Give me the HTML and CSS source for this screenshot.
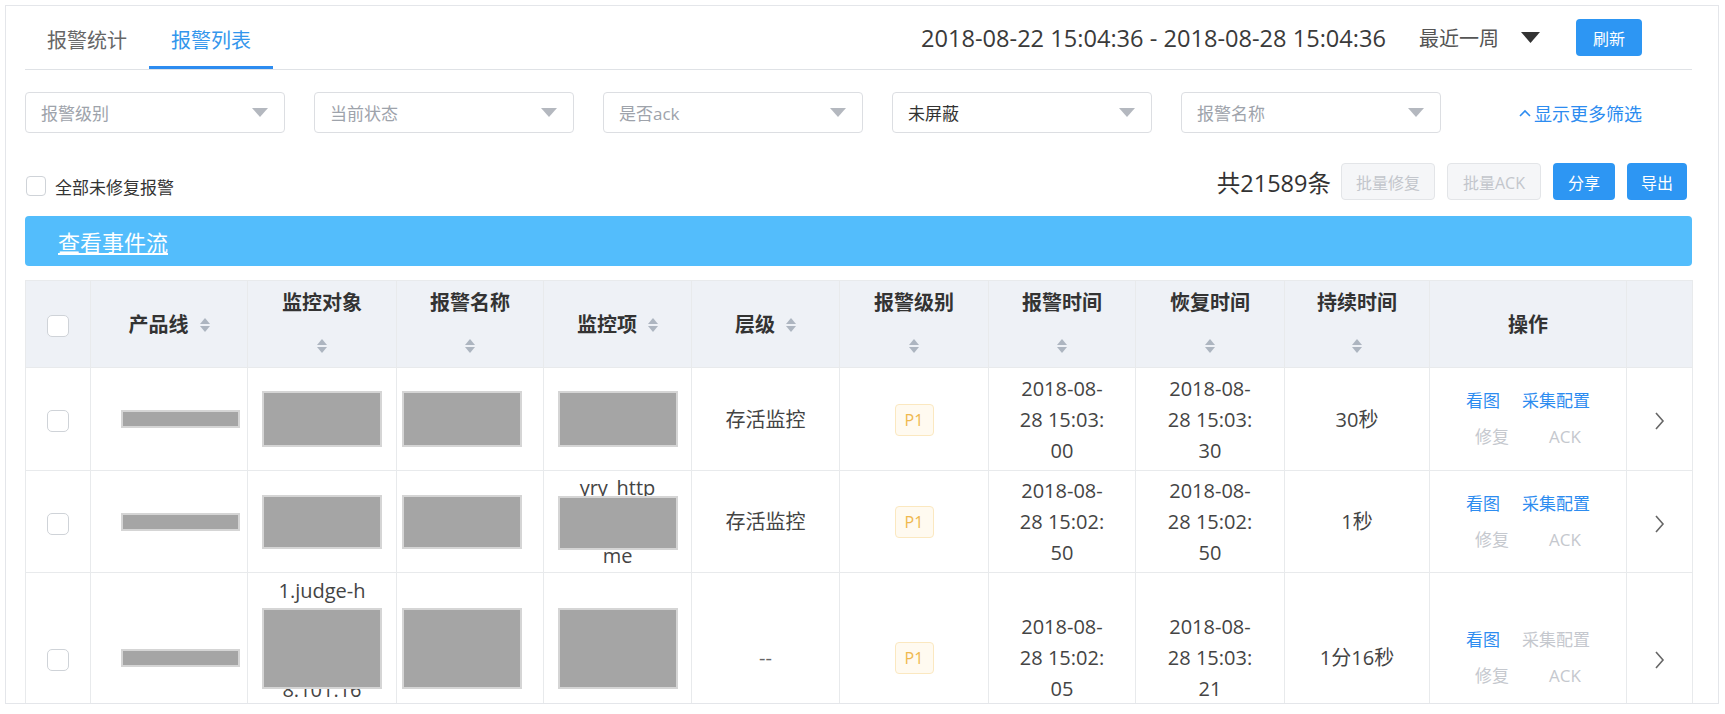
FILE: index.html
```html
<!DOCTYPE html>
<html lang="zh">
<head>
<meta charset="utf-8">
<title>报警列表</title>
<link rel="stylesheet" href="styles.css">
</head>
<body>
<div class="card">
  <div class="topbar">
    <div class="tabs">
      <div class="tab">报警统计</div>
      <div class="tab active">报警列表</div>
    </div>
    <div class="range">
      <span class="range-text">2018-08-22 15:04:36 - 2018-08-28 15:04:36</span>
      <span class="period">最近一周<svg class="period-caret" width="19" height="11" viewBox="0 0 19 11"><polygon points="0,0 19,0 9.5,11" fill="#333"/></svg></span>
      <button class="btn btn-primary btn-refresh">刷新</button>
    </div>
  </div>

  <div class="filters">
    <div class="select"><span class="ph">报警级别</span><svg class="caret" width="16" height="9" viewBox="0 0 16 9"><polygon points="0,0 16,0 8,9" fill="#b4b8bf"/></svg></div>
    <div class="select"><span class="ph">当前状态</span><svg class="caret" width="16" height="9" viewBox="0 0 16 9"><polygon points="0,0 16,0 8,9" fill="#b4b8bf"/></svg></div>
    <div class="select"><span class="ph">是否ack</span><svg class="caret" width="16" height="9" viewBox="0 0 16 9"><polygon points="0,0 16,0 8,9" fill="#b4b8bf"/></svg></div>
    <div class="select"><span class="val">未屏蔽</span><svg class="caret" width="16" height="9" viewBox="0 0 16 9"><polygon points="0,0 16,0 8,9" fill="#b4b8bf"/></svg></div>
    <div class="select"><span class="ph">报警名称</span><svg class="caret" width="16" height="9" viewBox="0 0 16 9"><polygon points="0,0 16,0 8,9" fill="#b4b8bf"/></svg></div>
    <a class="more"><svg width="12" height="8" viewBox="0 0 12 8"><polyline points="1,7 6,2 11,7" fill="none" stroke="#2d8cf0" stroke-width="1.6"/></svg>显示更多筛选</a>
  </div>

  <div class="toolbar">
    <label class="check-label"><span class="checkbox"></span>全部未修复报警</label>
    <div class="actions">
      <span class="total">共21589条</span>
      <button class="btn btn-disabled">批量修复</button>
      <button class="btn btn-disabled">批量ACK</button>
      <button class="btn btn-primary btn-share">分享</button>
      <button class="btn btn-primary btn-export">导出</button>
    </div>
  </div>

  <div class="banner"><a>查看事件流</a></div>

  <table class="grid">
    <colgroup>
      <col style="width:65px"><col style="width:157px"><col style="width:149px"><col style="width:147px">
      <col style="width:148px"><col style="width:148px"><col style="width:149px"><col style="width:147px">
      <col style="width:149px"><col style="width:145px"><col style="width:197px"><col style="width:66px">
    </colgroup>
    <thead>
      <tr>
        <th class="flush"><span class="checkbox cb"></span></th>
        <th>产品线<span class="sort"><i class="up"></i><i class="down"></i></span></th>
        <th><div>监控对象</div><div><span class="sort solo"><i class="up"></i><i class="down"></i></span></div></th>
        <th><div>报警名称</div><div><span class="sort solo"><i class="up"></i><i class="down"></i></span></div></th>
        <th>监控项<span class="sort"><i class="up"></i><i class="down"></i></span></th>
        <th>层级<span class="sort"><i class="up"></i><i class="down"></i></span></th>
        <th><div>报警级别</div><div><span class="sort solo"><i class="up"></i><i class="down"></i></span></div></th>
        <th><div>报警时间</div><div><span class="sort solo"><i class="up"></i><i class="down"></i></span></div></th>
        <th><div>恢复时间</div><div><span class="sort solo"><i class="up"></i><i class="down"></i></span></div></th>
        <th><div>持续时间</div><div><span class="sort solo"><i class="up"></i><i class="down"></i></span></div></th>
        <th>操作</th>
        <th class="flush"></th>
      </tr>
    </thead>
    <tbody>
      <tr class="r1">
        <td class="flush"><span class="checkbox cb"></span></td>
        <td class="flush"><span class="redact bar"></span></td>
        <td class="flush"><span class="redact box h56"></span></td>
        <td class="flush"><span class="redact box h56 near"></span></td>
        <td class="flush"><span class="redact box h56"></span></td>
        <td>存活监控</td>
        <td><span class="tag">P1</span></td>
        <td>2018-08-28 15:03:00</td>
        <td>2018-08-28 15:03:30</td>
        <td>30秒</td>
        <td class="flush"><div class="ops"><div class="ops-row"><span class="on">看图</span><span class="on">采集配置</span></div><div class="ops-row wide"><span class="off">修复</span><span class="off">ACK</span></div></div></td>
        <td class="flush"><svg class="chev" width="11" height="20" viewBox="0 0 11 20"><polyline points="2,2 9,10 2,18" fill="none" stroke="#666" stroke-width="1.6"/></svg></td>
      </tr>
      <tr class="r2">
        <td class="flush"><span class="checkbox cb"></span></td>
        <td class="flush"><span class="redact bar"></span></td>
        <td class="flush"><span class="redact box h54"></span></td>
        <td class="flush"><span class="redact box h54 near"></span></td>
        <td class="flush">
          <div class="stack">
            <span class="peek">yry_http</span>
            <span class="redact box h54 cover-a"></span>
            <span class="peek tail-a">me</span>
          </div>
        </td>
        <td>存活监控</td>
        <td><span class="tag">P1</span></td>
        <td>2018-08-28 15:02:50</td>
        <td>2018-08-28 15:02:50</td>
        <td>1秒</td>
        <td class="flush"><div class="ops"><div class="ops-row"><span class="on">看图</span><span class="on">采集配置</span></div><div class="ops-row wide"><span class="off">修复</span><span class="off">ACK</span></div></div></td>
        <td class="flush"><svg class="chev" width="11" height="20" viewBox="0 0 11 20"><polyline points="2,2 9,10 2,18" fill="none" stroke="#666" stroke-width="1.6"/></svg></td>
      </tr>
      <tr class="r3">
        <td class="flush"><span class="checkbox cb"></span></td>
        <td class="flush"><span class="redact bar"></span></td>
        <td class="flush top t4">
          <div class="stack">
            <span class="peek">1.judge-h</span>
            <span class="redact box h81 cover-b"></span>
            <span class="peek tail-b">8.101.16</span>
          </div>
        </td>
        <td class="flush top t35"><span class="redact box h81 near"></span></td>
        <td class="flush top t35"><span class="redact box h81"></span></td>
        <td class="muted">--</td>
        <td><span class="tag">P1</span></td>
        <td>2018-08-28 15:02:05</td>
        <td>2018-08-28 15:03:21</td>
        <td>1分16秒</td>
        <td class="flush"><div class="ops"><div class="ops-row"><span class="on">看图</span><span class="off">采集配置</span></div><div class="ops-row wide"><span class="off">修复</span><span class="off">ACK</span></div></div></td>
        <td class="flush"><svg class="chev" width="11" height="20" viewBox="0 0 11 20"><polyline points="2,2 9,10 2,18" fill="none" stroke="#666" stroke-width="1.6"/></svg></td>
      </tr>
    </tbody>
  </table>
</div>
</body>
</html>
```

FILE: styles.css
```css
* { box-sizing: border-box; }
html, body { margin: 0; padding: 0; background: #fff; }
body {
  font-family: "Open Sans", "Noto Sans CJK SC", sans-serif;
  color: #333;
}

.card {
  margin: 5px 0 0 5px;
  width: 1714px;
  height: 699px;
  border: 1px solid #e4e6ea;
  overflow: hidden;
  padding: 0 26px 0 19px;
}

/* top bar */
.topbar {
  display: flex;
  justify-content: space-between;
  height: 64px;
  border-bottom: 1px solid #dfe2e6;
}
.tabs { display: flex; }
.tab {
  padding: 21px 22px 0;
  height: 63px;
  font-size: 20px;
  line-height: 28px;
  color: #666;
  border-bottom: 3px solid transparent;
}
.tab.active { color: #3396ec; border-bottom-color: #2d8cf0; }

.range {
  display: flex;
  align-items: center;
  padding-right: 50px;
}
.range-text { font-size: 23.6px; color: #3a3a3a; }
.period {
  margin-left: 33px;
  font-size: 20px;
  color: #555;
  display: flex;
  align-items: center;
  gap: 22px;
}
.btn {
  border: none;
  border-radius: 4px;
  font-family: inherit;
  font-size: 16px;
  height: 37px;
  padding: 0;
}
.btn-primary { background: #2d96f3; color: #fff; }
.btn-refresh { margin-left: 36px; width: 66px; }

/* filters */
.filters {
  display: flex;
  align-items: center;
  gap: 29px;
  margin-top: 22px;
}
.select {
  width: 260px;
  height: 41px;
  border: 1px solid #dcdee2;
  border-radius: 4px;
  display: flex;
  align-items: center;
  justify-content: space-between;
  padding: 0 16px 0 15px;
  font-size: 17px;
}
.ph { color: #9ea3ab; }
.val { color: #333; }
.more {
  margin-left: auto;
  margin-right: 50px;
  color: #2d8cf0;
  font-size: 18px;
  display: flex;
  align-items: center;
  gap: 3px;
}

/* toolbar */
.toolbar {
  display: flex;
  justify-content: space-between;
  align-items: center;
  margin-top: 30px;
  height: 37px;
}
.check-label {
  display: flex;
  align-items: center;
  gap: 9px;
  font-size: 17px;
  padding-top: 9px;
  padding-left: 1px;
}
.checkbox {
  display: inline-block;
  width: 20px;
  height: 20px;
  border: 1px solid #cfd3d8;
  border-radius: 4px;
  background: #fff;
}
.actions {
  display: flex;
  align-items: center;
  gap: 12px;
  margin-right: 5px;
}
.total { font-size: 23.5px; color: #333; margin-right: -2px; }
.btn-disabled {
  background: #f5f6f8;
  color: #c3c6cc;
  border: 1px solid #e3e5e8;
  width: 94px;
}
.btn-share { width: 62px; }
.btn-export { width: 60px; }

/* banner */
.banner {
  margin-top: 16px;
  height: 50px;
  background: #53bdfc;
  border-radius: 4px;
  display: flex;
  align-items: center;
  padding-left: 33px;
}
.banner a { color: #fff; font-size: 22px; text-decoration: underline; }

/* table */
.grid {
  margin-top: 14px;
  width: 1667px;
  border-collapse: collapse;
  table-layout: fixed;
}
.grid th, .grid td {
  border: 1px solid #e8eaec;
  padding: 0 29px;
  text-align: center;
}
.grid th {
  background: #eef1f6;
  font-size: 20px;
  font-weight: 700;
  line-height: 43px;
  height: 86px;
  color: #333;
  white-space: nowrap;
}
.grid td {
  font-size: 20px;
  line-height: 31px;
  color: #444;
  word-break: break-all;
}
.grid .flush { padding: 0; }
.grid .top { vertical-align: top; }
.grid .t4 { padding-top: 4px; }
.grid .t35 { padding-top: 35px; }
.grid .muted { color: #666; }

.r1 { height: 103px; }
.r2 { height: 102px; }
.r3 { height: 170px; }

.cb { width: 22px; height: 22px; border-radius: 5px; vertical-align: middle; }

.sort {
  display: inline-flex;
  flex-direction: column;
  gap: 2px;
  vertical-align: middle;
  margin-left: 11px;
  margin-top: -3px;
}
.sort.solo { margin-left: 0; }
.sort i { display: block; width: 0; height: 0; border-left: 5.5px solid transparent; border-right: 5.5px solid transparent; }
.sort .up { border-bottom: 6px solid #adb5c0; }
.sort .down { border-top: 6px solid #adb5c0; }

.redact {
  display: block;
  margin: 0 auto;
  background: #a5a5a5;
  border: 2px solid #d5d5d5;
}
.redact.bar { width: 119px; height: 18px; position: relative; left: 11px; }
.redact.box { width: 120px; }
.redact.near { margin-left: 5px; }
.h56 { height: 56px; }
.h54 { height: 54px; }
.h81 { height: 81px; }

.stack { display: flex; flex-direction: column; align-items: center; }
.peek { line-height: 28px; font-size: 20px; color: #444; }
.cover-a { margin-top: -6px; position: relative; z-index: 1; }
.tail-a { margin-top: -8px; }
.cover-b { margin-top: 3px; position: relative; z-index: 1; }
.tail-b { margin-top: -13px; }

.tag {
  display: inline-block;
  width: 39px;
  height: 32px;
  line-height: 30px;
  border: 1px solid #fbe8c0;
  background: #fffaf0;
  color: #efb84e;
  font-size: 16px;
  border-radius: 4px;
  vertical-align: middle;
}

.ops {
  display: flex;
  flex-direction: column;
  align-items: center;
  gap: 14px;
  font-size: 17px;
  line-height: 22px;
}
.ops-row { display: flex; gap: 22px; }
.ops-row.wide { gap: 40px; }
.ops .on { color: #2d8cf0; }
.ops .off { color: #c5c8ce; }

.chev { vertical-align: middle; }
```
